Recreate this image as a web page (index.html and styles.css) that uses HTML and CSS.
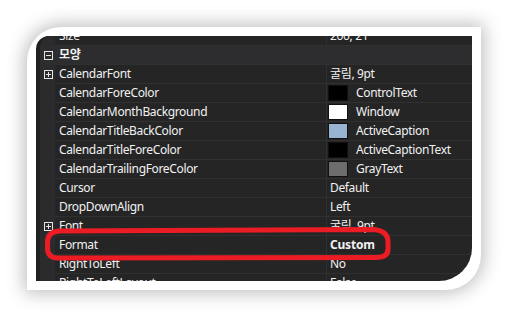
FILE: index.html
```html
<!DOCTYPE html>
<html lang="ko">
<head>
    <meta charset="UTF-8">
    <title>Properties</title>
    <link rel="stylesheet" href="styles.css">
</head>
<body>
<div class="page">
    <div class="frame">
        <div class="grid">
            <div class="rows">
                <div class="row">
                    <span class="gutter"></span>
                    <span class="name">Size</span>
                    <span class="value">200, 21</span>
                </div>
                <div class="row category">
                    <span class="gutter"><i class="box minus"></i></span>
                    <span class="name">모양</span>
                </div>
                <div class="row">
                    <span class="gutter"><i class="box plus"></i></span>
                    <span class="name">CalendarFont</span>
                    <span class="value">굴림, 9pt</span>
                </div>
                <div class="row">
                    <span class="gutter"></span>
                    <span class="name">CalendarForeColor</span>
                    <span class="value"><i class="swatch c-black"></i>ControlText</span>
                </div>
                <div class="row">
                    <span class="gutter"></span>
                    <span class="name">CalendarMonthBackground</span>
                    <span class="value"><i class="swatch c-white"></i>Window</span>
                </div>
                <div class="row">
                    <span class="gutter"></span>
                    <span class="name">CalendarTitleBackColor</span>
                    <span class="value"><i class="swatch c-caption"></i>ActiveCaption</span>
                </div>
                <div class="row">
                    <span class="gutter"></span>
                    <span class="name">CalendarTitleForeColor</span>
                    <span class="value"><i class="swatch c-black"></i>ActiveCaptionText</span>
                </div>
                <div class="row">
                    <span class="gutter"></span>
                    <span class="name">CalendarTrailingForeColor</span>
                    <span class="value"><i class="swatch c-gray"></i>GrayText</span>
                </div>
                <div class="row">
                    <span class="gutter"></span>
                    <span class="name">Cursor</span>
                    <span class="value">Default</span>
                </div>
                <div class="row">
                    <span class="gutter"></span>
                    <span class="name">DropDownAlign</span>
                    <span class="value">Left</span>
                </div>
                <div class="row">
                    <span class="gutter"><i class="box plus"></i></span>
                    <span class="name">Font</span>
                    <span class="value">굴림, 9pt</span>
                </div>
                <div class="row">
                    <span class="gutter"></span>
                    <span class="name">Format</span>
                    <span class="value bold">Custom</span>
                </div>
                <div class="row">
                    <span class="gutter"></span>
                    <span class="name">RightToLeft</span>
                    <span class="value">No</span>
                </div>
                <div class="row">
                    <span class="gutter"></span>
                    <span class="name">RightToLeftLayout</span>
                    <span class="value">False</span>
                </div>
            </div>
        </div>
    </div>
    <svg class="mark" width="508" height="317" viewBox="0 0 508 317">
        <path d="M60 231 L372 229.5 Q388 230 388 242 L388 249 Q388 257.5 376 257.5 L57 258 Q47.5 257.5 47.5 248 L47.5 242 Q47.5 231.5 60 231 Z"
              fill="none" stroke="#ec1c24" stroke-width="5" stroke-linejoin="round"/>
    </svg>
</div>
</body>
</html>
```

FILE: styles.css
```css
*{
    margin: 0;
    padding: 0;
    box-sizing: border-box;
}
body{
    background: #fff;
    font-family: "Noto Sans", "Noto Sans CJK KR", sans-serif;
    font-size: 12px;
    letter-spacing: -0.35px;
    color: #f1f1f1;
    overflow: hidden;
}
.page{
    position: relative;
    width: 508px;
    height: 317px;
    padding: 27px;
}
.frame{
    width: 454px;
    height: 263px;
    padding: 9px;
    background: #fff;
    border-radius: 34px 0 35px 0;
    box-shadow: 0 0 18px 3px rgba(0, 0, 0, 0.26);
}
.grid{
    height: 245px;
    overflow: hidden;
    background: #252526;
    border-left: 4px solid #202021;
    border-radius: 13px 0 33px 0;
}
.rows{
    margin-top: -9px;
}
.row{
    display: grid;
    grid-template-columns: 15px 272px 1fr;
    height: 19px;
    line-height: 18px;
    white-space: nowrap;
}
.row .gutter{
    background: #2b2b2d;
    display: flex;
    align-items: center;
}
.row .name,
.row .value{
    border-bottom: 1px solid #303031;
    overflow: hidden;
}
.row .name{
    padding-left: 4px;
    border-right: 1px solid #303031;
}
.row .value{
    padding-left: 3px;
    display: flex;
    align-items: center;
}
.row .bold{
    font-weight: bold;
    letter-spacing: -0.2px;
}
.row.category{
    background: #2d2d30;
}
.row.category .gutter{
    background: #2d2d30;
}
.row.category .name{
    font-weight: bold;
    border-right: none;
    grid-column: 2 / 4;
}
.box{
    position: relative;
    display: block;
    width: 9px;
    height: 9px;
    margin-left: 4px;
    border: 1px solid #e6e6e6;
}
.box::before,
.plus::after{
    content: "";
    position: absolute;
    background: #e6e6e6;
}
.box::before{
    left: 1px;
    top: 3px;
    width: 5px;
    height: 1px;
}
.plus::after{
    left: 3px;
    top: 1px;
    width: 1px;
    height: 5px;
}
.swatch{
    display: block;
    width: 20px;
    height: 16px;
    margin-left: -2px;
    margin-right: 8px;
    border: 1px solid #111;
}
.c-black{ background: #000; }
.c-white{ background: #fff; }
.c-caption{ background: #99b4d1; }
.c-gray{ background: #6d6d6d; }
.mark{
    position: absolute;
    left: 0;
    top: 0;
}
```
